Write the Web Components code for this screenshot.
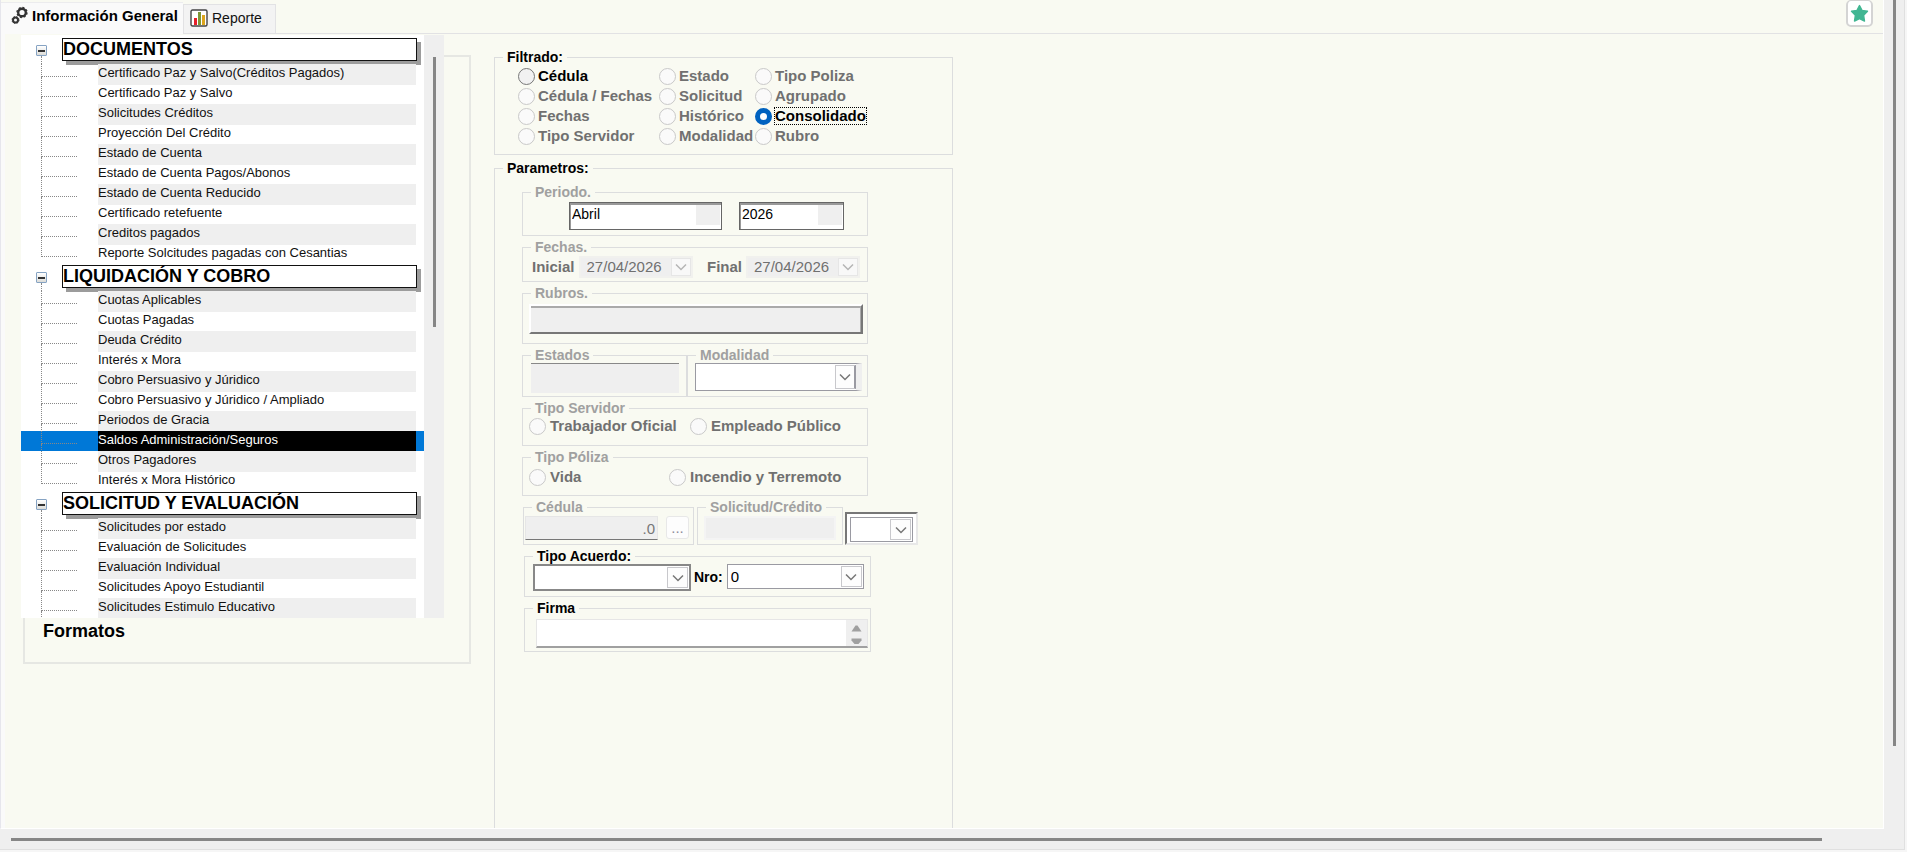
<!DOCTYPE html>
<html lang="es">
<head>
<meta charset="utf-8">
<title>Información General</title>
<style>
  * { box-sizing: border-box; }

  body {
    margin: 0;
    font-family: "Liberation Sans", Arial, sans-serif;
    font-size: 15px;
    line-height: 16px;
    color: #000;
    overflow: hidden;
  }

  .columns {
    display: grid;
    grid-template-columns: 450px 459px 1fr;
    column-gap: 23px;
    height: 100%;
  }

  /* the tree lies over the frame, both fill the same cell */
  .left {
    display: grid;
    align-items: start;
    justify-items: start;
    padding-top: 1px;
  }

  .left > * { grid-area: 1 / 1; }

  .frame {
    display: flex;
    align-items: flex-end;
    width: 448px;
    height: 609px;
    margin: 20px 0 0 2px;
    padding: 0 0 21px 18px;
    border: 2px solid #e6e7e3;
    font-size: 18px;
    font-weight: bold;
    line-height: 20px;
  }

  .form {
    display: flex;
    flex-direction: column;
    gap: 5px;
    min-height: 0;
    padding-top: 15px;
  }

  .params { flex: 1; --group-pad: 8px 0 0; }

  .filters {
    display: grid;
    grid-template-columns: 141px 96px 1fr;
    --radio-gap: 3px;
  }

  .stack {
    display: flex;
    flex-direction: column;
    align-items: flex-start;
    gap: 3px;
    padding-left: 27px;
  }

  .stack > ui-group { width: 346px; }
  .stack > .late { width: 347px; margin-left: 2px; }

  .row { display: flex; align-items: flex-start; }
  .strong { font-weight: bold; }

  input, button { font: inherit; }

  .rubros {
    display: block;
    width: 334px;
    height: 30px;
    border: 2px solid;
    border-color: #fff #777 #777 #fff;
    background: #efefef;
    box-shadow: inset 0 2px #aaa, inset -1px 0 #aaa;
  }

  .estados {
    width: 148px;
    height: 30px;
    border: 0;
    border-top: 1px solid #888;
    background: #efefef;
  }

  .number {
    width: 133px;
    height: 24px;
    padding: 0 2px;
    border: 1px solid #e6e6e6;
    border-bottom: 1px solid #777;
    background: #efefef;
    color: #777;
    text-align: right;
  }

  .dots {
    width: 23px;
    height: 23px;
    margin-left: 8px;
    padding: 0;
    border: 1px solid #e8e8e8;
    border-radius: 3px;
    background: #fdfdfd;
    color: #8c8c9c;
  }

  .request {
    width: 132px;
    height: 24px;
    border: 2px solid #f4f4f4;
    background: #efefef;
  }

  .sunken {
    margin: 13px 0 0 2px;
    padding: 3px 3px 1px;
    border: 2px solid;
    border-color: #777 #e8e8e8 #e8e8e8 #777;
    background: #fff;
  }
</style>
</head>
<body>
<app-window>
  <tab-strip slot="tabs"></tab-strip>

  <div class="columns">
    <div class="left">
      <div class="frame">Formatos</div>
      <tree-view>
        <tree-section label="DOCUMENTOS">
          <tree-item>Certificado Paz y Salvo(Créditos Pagados)</tree-item>
          <tree-item>Certificado Paz y Salvo</tree-item>
          <tree-item>Solicitudes Créditos</tree-item>
          <tree-item>Proyección Del Crédito</tree-item>
          <tree-item>Estado de Cuenta</tree-item>
          <tree-item>Estado de Cuenta Pagos/Abonos</tree-item>
          <tree-item>Estado de Cuenta Reducido</tree-item>
          <tree-item>Certificado retefuente</tree-item>
          <tree-item>Creditos pagados</tree-item>
          <tree-item>Reporte Solcitudes pagadas con Cesantias</tree-item>
        </tree-section>
        <tree-section label="LIQUIDACIÓN Y COBRO">
          <tree-item>Cuotas Aplicables</tree-item>
          <tree-item>Cuotas Pagadas</tree-item>
          <tree-item>Deuda Crédito</tree-item>
          <tree-item>Interés x Mora</tree-item>
          <tree-item>Cobro Persuasivo y Júridico</tree-item>
          <tree-item>Cobro Persuasivo y Júridico / Ampliado</tree-item>
          <tree-item>Periodos de Gracia</tree-item>
          <tree-item selected>Saldos Administración/Seguros</tree-item>
          <tree-item>Otros Pagadores</tree-item>
          <tree-item>Interés x Mora Histórico</tree-item>
        </tree-section>
        <tree-section label="SOLICITUD Y EVALUACIÓN">
          <tree-item>Solicitudes por estado</tree-item>
          <tree-item>Evaluación de Solicitudes</tree-item>
          <tree-item>Evaluación Individual</tree-item>
          <tree-item>Solicitudes Apoyo Estudiantil</tree-item>
          <tree-item more>Solicitudes Estimulo Educativo</tree-item>
        </tree-section>
      </tree-view>
    </div>

    <div class="form">
      <ui-group label="Filtrado:" style="--group-pad: 1px 23px 8px">
        <div class="filters">
          <ui-radio>Cédula</ui-radio>
          <ui-radio disabled>Estado</ui-radio>
          <ui-radio disabled>Tipo Poliza</ui-radio>
          <ui-radio disabled>Cédula / Fechas</ui-radio>
          <ui-radio disabled>Solicitud</ui-radio>
          <ui-radio disabled>Agrupado</ui-radio>
          <ui-radio disabled>Fechas</ui-radio>
          <ui-radio disabled>Histórico</ui-radio>
          <ui-radio checked>Consolidado</ui-radio>
          <ui-radio disabled>Tipo Servidor</ui-radio>
          <ui-radio disabled>Modalidad</ui-radio>
          <ui-radio disabled>Rubro</ui-radio>
        </div>
      </ui-group>

      <ui-group label="Parametros:" class="params" open>
        <div class="stack">
          <ui-group label="Periodo." dim style="--group-pad: 2px 0 5px 46px">
            <div class="row" style="gap: 17px">
              <ui-combo kind="period" label="Mes" value="Abril" style="width: 153px"></ui-combo>
              <ui-combo kind="period" label="Año" value="2026" style="width: 105px"></ui-combo>
            </div>
          </ui-group>

          <ui-group label="Fechas." dim style="--group-pad: 1px 7px 3px 9px">
            <div class="row" style="justify-content: space-between">
              <ui-date label="Inicial" value="27/04/2026"></ui-date>
              <ui-date label="Final" value="27/04/2026"></ui-date>
            </div>
          </ui-group>

          <ui-group label="Rubros." dim style="--group-pad: 3px 0 9px 6px">
            <button class="rubros" aria-label="Rubros" disabled></button>
          </ui-group>

          <div class="row">
            <ui-group label="Estados" dim style="width: 165px; --group-pad: 0 0 3px 8px">
              <div class="row"><input class="estados" aria-label="Estados" disabled></div>
            </ui-group>
            <ui-group label="Modalidad" dim style="width: 181px; --group-pad: 0 0 3px 7px">
              <ui-combo kind="padded" label="Modalidad" style="width: 167px"></ui-combo>
            </ui-group>
          </div>

          <ui-group label="Tipo Servidor" dim style="--group-pad: 0 0 9px 6px">
            <div class="row">
              <ui-radio disabled style="width: 161px">Trabajador Oficial</ui-radio>
              <ui-radio disabled>Empleado Público</ui-radio>
            </div>
          </ui-group>

          <ui-group label="Tipo Póliza" dim style="--group-pad: 2px 0 8px 6px">
            <div class="row">
              <ui-radio disabled style="width: 140px">Vida</ui-radio>
              <ui-radio disabled>Incendio y Terremoto</ui-radio>
            </div>
          </ui-group>

          <div class="row">
            <ui-group label="Cédula" dim style="width: 171px; margin-left: 1px; --group-pad: 1px 0 4px 1px">
              <div class="row">
                <input class="number" aria-label="Cédula" value=".0" disabled>
                <button class="dots" aria-label="Buscar cédula" disabled>...</button>
              </div>
            </ui-group>
            <ui-group label="Solicitud/Crédito" dim style="width: 146px; margin-left: 3px; --group-pad: 1px 0 4px 6px">
              <div class="row"><input class="request" aria-label="Solicitud/Crédito" disabled></div>
            </ui-group>
            <div class="sunken">
              <ui-combo label="Tipo" style="width: 63px; height: 25px"></ui-combo>
            </div>
          </div>

          <ui-group label="Tipo Acuerdo:" class="late" style="--group-pad: 0 0 5px 8px">
            <div class="row">
              <ui-combo kind="framed" label="Tipo Acuerdo" style="width: 158px"></ui-combo>
              <span class="strong" style="padding: 5px 4px 0 3px; font-size: 14px">Nro:</span>
              <ui-combo label="Nro" value="0" style="width: 137px; height: 25px"></ui-combo>
            </div>
          </ui-group>

          <ui-group label="Firma" class="late" style="--group-pad: 3px 0 3px 11px">
            <ui-memo label="Firma"></ui-memo>
          </ui-group>
        </div>
      </ui-group>
    </div>
  </div>
</app-window>

<script>
function makeTemplate(html) {
  const template = document.createElement('template');
  template.innerHTML = `<style>
    * { box-sizing: border-box; }
    [hidden] { display: none; }
  </style>` + html;
  return template;
}

class BaseElement extends HTMLElement {
  constructor(template) {
    super();
    this.attachShadow({ mode: 'open' });
    this.shadowRoot.appendChild(template.content.cloneNode(true));
  }

  $(selector) {
    return this.shadowRoot.querySelector(selector);
  }
}

const windowTemplate = makeTemplate(`
  <style>
    :host {
      display: grid;
      grid-template-columns: minmax(0, 1fr) 21px;
      grid-template-rows: auto minmax(0, 1fr) 21px;
      height: 100vh;
      border: solid #f6f6f6;
      border-width: 0 2px 2px 0;
      background: #efefef;
      box-sizing: border-box;
    }

    .tabs, .content {
      background: #f9faf2;
      border-left: 1px solid #e6e6ec;
      border-right: 1px solid #fff;
    }

    .content {
      min-height: 0;
      overflow: hidden;
      padding-left: 20px;
      box-shadow: inset 4px 0 #fafafa;
      border-bottom: 1px solid #fff;
    }

    .vertical {
      grid-column: 2;
      grid-row: 1 / 3;
      padding-left: 9px;
      border-right: 1px solid #e0e0e0;
    }

    .vertical::before {
      content: "";
      display: block;
      width: 3px;
      height: 90%;
      background: #868686;
    }

    .horizontal {
      grid-column: 1 / 3;
      padding: 9px 82px 0 11px;
      border: solid #e0e0e0;
      border-width: 0 1px 1px 0;
    }

    .horizontal::before {
      content: "";
      display: block;
      height: 3px;
      background: #868686;
    }
  </style>
  <div class="tabs"><slot name="tabs"></slot></div>
  <div class="content"><slot></slot></div>
  <div class="vertical"></div>
  <div class="horizontal"></div>
`);

class AppWindow extends BaseElement {
  constructor() { super(windowTemplate); }
}

const tabsTemplate = makeTemplate(`
  <style>
    :host {
      display: flex;
      align-items: flex-end;
      height: 34px;
      box-shadow: inset 0 -1px #e2e2e4;
    }

    button { font: inherit; }

    .tab {
      display: flex;
      align-items: center;
      border: 0;
      padding: 0;
      color: #111;
    }

    .active {
      width: 182px;
      height: 32px;
      padding: 0 0 6px 10px;
      gap: 4px;
      background: #fafafa;
      font-weight: bold;
      color: #000;
      white-space: nowrap;
      border-top: 1px solid #ececee;
    }

    .other {
      width: 93px;
      height: 30px;
      gap: 4px;
      padding: 0 0 2px 6px;
      border: 1px solid #e2e2e4;
      background: #f3f3f3;
      font-size: 14px;
    }

    .star {
      display: flex;
      align-items: center;
      justify-content: center;
      align-self: flex-start;
      width: 27px;
      height: 27px;
      margin: 0 10px 0 auto;
      padding: 0;
      border: 2px solid #d4d4d4;
      border-top-width: 1px;
      border-radius: 5px;
      background: #fff;
    }
  </style>
  <button class="tab active">
    <svg width="17" height="19" viewBox="0 0 17 19" fill="none" stroke="#333">
      <circle cx="11" cy="6.5" r="3.8" stroke-width="2.4"/>
      <circle cx="11" cy="6.5" r="5" stroke-width="1.4" stroke-dasharray="2 1.9"/>
      <circle cx="4.5" cy="14" r="2.5" stroke-width="2"/>
      <circle cx="4.5" cy="14" r="3.5" stroke-width="1" stroke-dasharray="1.4 1.4"/>
    </svg>
    Información General
  </button>
  <button class="tab other">
    <svg width="18" height="18" viewBox="0 0 18 18">
      <rect x="1" y="1" width="16" height="16" rx="1.5" fill="#fff" stroke="#444" stroke-width="1.4"/>
      <rect x="4" y="9" width="3" height="7" fill="#e5202a"/>
      <rect x="8" y="3" width="3" height="13" fill="#7d9636"/>
      <rect x="12" y="6" width="3" height="10" fill="#dca51c"/>
    </svg>
    Reporte
  </button>
  <button class="star" aria-label="Favorito">
    <svg width="19" height="19" viewBox="0 0 19 19">
      <path d="M9.5 1.5 L12 6.4 L17.5 7.2 L13.6 11.2 L14.5 17 L9.5 14.5 L4.5 17 L5.4 11.2 L1.5 7.2 L7 6.4 Z"
        fill="#41b692" stroke="#41b692" stroke-width="1.4" stroke-linejoin="round"/>
    </svg>
  </button>
`);

class TabStrip extends BaseElement {
  constructor() { super(tabsTemplate); }
}

const treeTemplate = makeTemplate(`
  <style>
    :host {
      display: grid;
      grid-template-columns: 403px 20px;
      height: 583px;
      overflow: hidden;
      font-size: 13px;
      color: #111;
    }

    .list { padding-top: 2px; background: #fff; overflow: hidden; height: 583px; }
    .bar { padding: 22px 0 0 9px; background: #efefef; }
    .thumb { width: 3px; height: 270px; background: #868686; }
  </style>
  <div class="list" role="tree"><slot></slot></div>
  <div class="bar"><div class="thumb"></div></div>
`);

class TreeView extends BaseElement {
  constructor() { super(treeTemplate); }
}

const sectionTemplate = makeTemplate(`
  <style>
    :host { display: block; }

    .head { display: flex; height: 27px; padding-left: 15px; }
    .mark { width: 26px; padding-top: 8px; }

    .toggle {
      display: flex;
      align-items: center;
      justify-content: center;
      width: 11px;
      height: 11px;
      padding: 0;
      border: 1px solid #86a3c3;
      border-radius: 1px;
      background: linear-gradient(#fff, #dcdcd8);
    }

    .toggle::before { content: ""; width: 7px; height: 2px; background: #333; }

    .mark::after {
      content: "";
      display: block;
      height: 8px;
      margin-left: 5px;
      border-left: 1px dotted #888;
    }

    .title {
      width: 355px;
      height: 23px;
      margin-top: 1px;
      border: 1px solid #111;
      box-shadow: 4px 4px #9c9c9c;
      background: #fff;
      color: #000;
      font-size: 18px;
      font-weight: bold;
      line-height: 21px;
    }
  </style>
  <div class="head">
    <div class="mark"><button class="toggle" aria-label="Contraer"></button></div>
    <div class="title"></div>
  </div>
  <div class="items" role="group"><slot></slot></div>
`);

class TreeSection extends BaseElement {
  constructor() {
    super(sectionTemplate);
    this.$('.toggle').addEventListener('click', () => {
      this.$('.items').toggleAttribute('hidden');
    });
  }

  connectedCallback() {
    this.$('.title').textContent = this.getAttribute('label');
  }
}

const itemTemplate = makeTemplate(`
  <style>
    :host {
      display: grid;
      grid-template-columns: 36px minmax(0, 1fr);
      column-gap: 21px;
      height: 20px;
      padding: 0 8px 0 20px;
      cursor: default;
      box-sizing: border-box;
    }

    .guide::before {
      content: "";
      display: block;
      height: 12px;
      border: dotted #888;
      border-width: 0 0 1px 1px;
    }

    .guide::after {
      content: "";
      display: block;
      height: 8px;
      border-left: 1px dotted #888;
    }

    :host(:last-child:not([more])) .guide::after { display: none; }

    .text { line-height: 18px; white-space: nowrap; }
    :host(:nth-child(odd)) .text { background: #efefef; }
    :host([selected]) { background: #0078d7; }
    :host([selected]) .text { background: #000; color: #fff; }
  </style>
  <div class="guide"></div>
  <div class="text"><slot></slot></div>
`);

class TreeItem extends BaseElement {
  constructor() { super(itemTemplate); }

  connectedCallback() {
    this.setAttribute('role', 'treeitem');
  }
}

const groupTemplate = makeTemplate(`
  <style>
    :host { display: block; }

    fieldset {
      min-width: 0;
      height: 100%;
      margin: 0;
      padding: 0;
      border: 1px solid #dcddde;
    }

    :host([open]) fieldset { border-bottom: 0; }

    legend {
      height: 16px;
      margin-left: 8px;
      padding: 0 4px;
      font-size: 14px;
      font-weight: bold;
      line-height: 16px;
      color: #000;
    }

    :host([dim]) legend { color: #a0a0a0; }
    .body { padding: var(--group-pad, 0); }
  </style>
  <fieldset>
    <legend></legend>
    <div class="body"><slot></slot></div>
  </fieldset>
`);

class UiGroup extends BaseElement {
  constructor() { super(groupTemplate); }

  connectedCallback() {
    this.$('legend').textContent = this.getAttribute('label');
  }
}

const radioTemplate = makeTemplate(`
  <style>
    :host { display: block; height: 20px; font-weight: bold; white-space: nowrap; }

    label {
      display: inline-flex;
      align-items: center;
      height: 20px;
      gap: var(--radio-gap, 4px);
    }

    input {
      appearance: none;
      flex: none;
      width: 17px;
      height: 17px;
      margin: 0;
      border: 1px solid #777;
      border-radius: 50%;
      background: #f1f1f1;
      outline: 0;
    }

    input:checked { border: 5px solid #0062c0; background: #fff; }
    input:disabled { border-color: #c9c9c9; background: #fafafa; }
    input:disabled + span { color: #707070; }
    input:checked + span { outline: 1px dotted #000; }
  </style>
  <label><input type="radio"><span><slot></slot></span></label>
`);

class UiRadio extends BaseElement {
  constructor() {
    super(radioTemplate);
    // native grouping stops at the shadow root, so clear the siblings here
    this.$('input').addEventListener('change', () => {
      for (const other of this.parentElement.querySelectorAll('ui-radio')) {
        if (other !== this) other.$('input').checked = false;
      }
    });
  }

  connectedCallback() {
    this.$('input').disabled = this.hasAttribute('disabled');
    this.$('input').checked = this.hasAttribute('checked');
  }
}

const comboTemplate = makeTemplate(`
  <style>
    :host {
      display: flex;
      border: 1px solid #9a9aa2;
      background: #fff;
      box-sizing: border-box;
    }

    select {
      appearance: none;
      flex: 1;
      min-width: 0;
      padding: 0 3px;
      border: 0;
      background: #fff;
      color: #000;
      font: inherit;
      outline: 0;
    }

    .arrow {
      display: flex;
      align-items: center;
      justify-content: center;
      width: 21px;
      margin: 1px;
      border: 1px solid #c8c8cc;
      background: #fdfdfd;
    }

    :host([kind="period"]) {
      height: 28px;
      padding: 1px;
      border-color: #666;
      box-shadow: inset 1px 2px #999;
    }

    :host([kind="period"]) select { margin: 2px 0 3px 1px; padding: 0 0 3px; font-size: 14px; }
    :host([kind="period"]) .arrow { width: 24px; margin: 1px 0 3px; border: 0; background: #efefef; }
    :host([kind="period"]) svg { display: none; }

    :host([kind="padded"]) { height: 28px; margin-bottom: 2px; border-right: 6px solid #efefef; }
    :host([kind="padded"]) .arrow { margin-right: 0; border-right: 2px solid #9a9aa2; }
    :host([kind="framed"]) { height: 27px; border: 2px solid #888; }
  </style>
  <select><option></option></select>
  <div class="arrow">
    <svg width="12" height="8" viewBox="0 0 12 8" fill="none" stroke="#777" stroke-width="1.5">
      <path d="M1 1.5 L6 6.5 L11 1.5"/>
    </svg>
  </div>
`);

class UiCombo extends BaseElement {
  constructor() { super(comboTemplate); }

  connectedCallback() {
    this.$('select').setAttribute('aria-label', this.getAttribute('label'));
    this.$('option').textContent = this.getAttribute('value') || '';
  }
}

const dateTemplate = makeTemplate(`
  <style>
    :host { display: flex; align-items: center; height: 22px; color: #707070; }

    label { padding-right: 4px; font-size: 15px; font-weight: bold; }

    .box {
      display: flex;
      width: 114px;
      height: 22px;
      border: 2px solid #f1f1ee;
      background: #efefef;
    }

    input {
      flex: 1;
      min-width: 0;
      padding: 0 0 0 6px;
      border: 0;
      background: none;
      color: #707070;
      font: inherit;
    }

    .arrow {
      display: flex;
      align-items: center;
      justify-content: center;
      width: 20px;
      border: 1px solid #e6e6e6;
      background: #f8f8f8;
    }
  </style>
  <label for="date"></label>
  <div class="box">
    <input id="date" disabled>
    <div class="arrow">
      <svg width="12" height="8" viewBox="0 0 12 8" fill="none" stroke="#b4b4b4" stroke-width="1.5">
        <path d="M1 1.5 L6 6.5 L11 1.5"/>
      </svg>
    </div>
  </div>
`);

class UiDate extends BaseElement {
  constructor() { super(dateTemplate); }

  connectedCallback() {
    this.$('label').textContent = this.getAttribute('label');
    this.$('input').value = this.getAttribute('value');
  }
}

const memoTemplate = makeTemplate(`
  <style>
    :host {
      display: flex;
      width: 332px;
      height: 29px;
      border: 1px solid #e6e6e6;
      border-bottom: 2px solid #a0a0a0;
      background: #fff;
      box-sizing: border-box;
    }

    textarea {
      flex: 1;
      min-width: 0;
      padding: 2px;
      border: 0;
      background: none;
      font: inherit;
      resize: none;
      overflow: hidden;
      outline: 0;
    }

    .bar { width: 21px; padding: 5px 0 0 5px; background: #efefef; }
    svg { display: block; }
  </style>
  <textarea></textarea>
  <div class="bar">
    <svg width="11" height="20" viewBox="0 0 11 20" fill="#a0a0a0">
      <path d="M4.5 0.5 H6.5 L10.5 6.5 H0.5 Z"/>
      <path d="M0.5 13.5 H10.5 V15.5 L7.5 19 H3.5 L0.5 15.5 Z"/>
    </svg>
  </div>
`);

class UiMemo extends BaseElement {
  constructor() { super(memoTemplate); }

  connectedCallback() {
    this.$('textarea').setAttribute('aria-label', this.getAttribute('label'));
  }
}

customElements.define('app-window', AppWindow);
customElements.define('tab-strip', TabStrip);
customElements.define('tree-view', TreeView);
customElements.define('tree-section', TreeSection);
customElements.define('tree-item', TreeItem);
customElements.define('ui-group', UiGroup);
customElements.define('ui-radio', UiRadio);
customElements.define('ui-combo', UiCombo);
customElements.define('ui-date', UiDate);
customElements.define('ui-memo', UiMemo);
</script>
</body>
</html>
